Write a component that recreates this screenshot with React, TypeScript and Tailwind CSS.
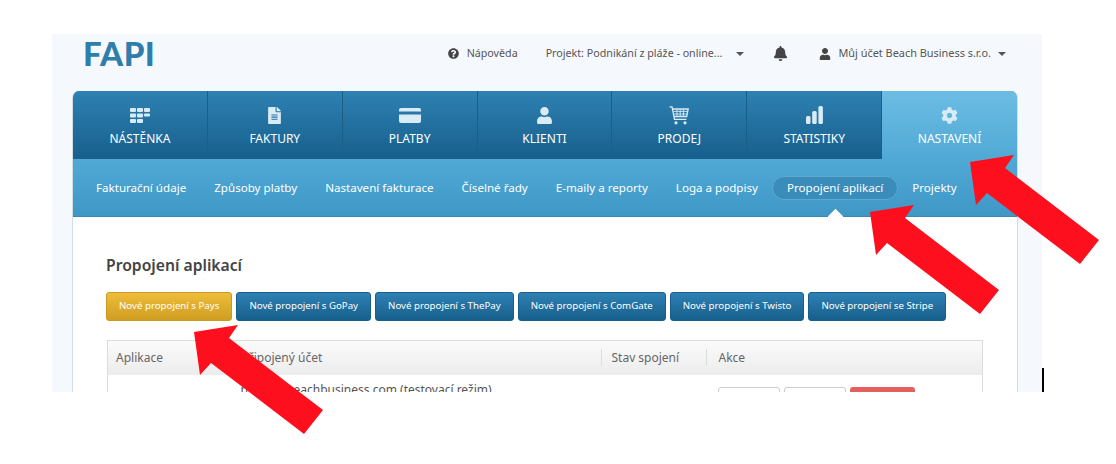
import { FaBell, FaCog, FaFileAlt, FaQuestionCircle, FaUser } from "react-icons/fa";
import type { ReactNode } from "react";

const DashIcon = () => (
  <svg width="20" height="15" viewBox="0 0 20 15" fill="currentColor">
    <rect x="0" y="0" width="6" height="4" rx="1" />
    <rect x="7" y="0" width="6" height="4" rx="1" />
    <rect x="14" y="0" width="6" height="4" rx="1" />
    <rect x="0" y="5.500" width="6" height="4" rx="1" />
    <rect x="7" y="5.500" width="6" height="4" rx="1" />
    <rect x="14" y="5.500" width="6" height="3" rx="1" />
    <rect x="0" y="11" width="6" height="4" rx="1" />
    <rect x="7" y="11" width="6" height="4" rx="1" />
  </svg>
);

const CardIcon = () => (
  <svg width="22" height="15" viewBox="0 0 22 15" fill="currentColor">
    <path d="M2 0h18a2 2 0 0 1 2 2v1.500H0V2a2 2 0 0 1 2-2z" />
    <path d="M0 6.500h22V13a2 2 0 0 1-2 2H2a2 2 0 0 1-2-2z" />
  </svg>
);

const CartIcon = () => (
  <svg width="20" height="19" viewBox="0 0 20 19" fill="none" stroke="currentColor">
    <path d="M0.500 0.800h2.500l2.500 12.500h12" strokeWidth="1.300" />
    <path d="M3.600 3h15.600l-1.500 7.500H5" strokeWidth="1.300" />
    <path d="M4.500 5.400h14M4.900 8h13M8 3v7.500M11.200 3v7.500M14.400 3v7.500" strokeWidth="0.900" />
    <circle cx="7" cy="16.800" r="1.600" fill="currentColor" stroke="none" />
    <circle cx="16" cy="16.800" r="1.600" fill="currentColor" stroke="none" />
  </svg>
);

const StatsIcon = () => (
  <svg width="17" height="18" viewBox="0 0 17 18" fill="currentColor">
    <rect x="0" y="10" width="4.500" height="8" rx="1.500" />
    <rect x="6.200" y="5" width="4.500" height="13" rx="1.500" />
    <rect x="12.400" y="0" width="4.500" height="18" rx="1.500" />
  </svg>
);

const Caret = ({ className }: { className: string }) => (
  <svg width="8" height="4" viewBox="0 0 8 4" fill="#555" className={className}>
    <path d="M0 0h8L4 4z" />
  </svg>
);

const tabs: [string, ReactNode][] = [
  ["NÁSTĚNKA", <DashIcon />],
  ["FAKTURY", <FaFileAlt size={17} />],
  ["PLATBY", <CardIcon />],
  ["KLIENTI", <FaUser size={17} />],
  ["PRODEJ", <CartIcon />],
  ["STATISTIKY", <StatsIcon />],
];

const subnav = [
  "Fakturační údaje",
  "Způsoby platby",
  "Nastavení fakturace",
  "Číselné řady",
  "E-maily a reporty",
  "Loga a podpisy",
];

const connectButtons = [
  "Nové propojení s GoPay",
  "Nové propojení s ThePay",
  "Nové propojení s ComGate",
  "Nové propojení s Twisto",
  "Nové propojení se Stripe",
];

function Arrow({ x, y }: { x: number; y: number }) {
  return (
    <polygon
      transform={`translate(${x} ${y})`}
      points="0,0 -44,7 -38,50 -27,38 66,109 85,85 -9,13"
      fill="#fd0f1e"
    />
  );
}

export default function App() {
  return (
    <div className="relative h-[464px] w-[1116px] overflow-hidden bg-white pl-[52px] pt-[34px] font-['Noto_Sans',sans-serif]">
      <div className="h-[358px] w-[990px] overflow-hidden bg-[#f5f9fd] pl-[20px] pr-[24px]">
        <header className="flex h-[57px] items-start text-[10.700px] text-[#555]">
          <div className="ml-[11px] font-['Lato',sans-serif] text-[33px] font-black leading-[39px] tracking-[0.4px] text-[#2f7dab]">
            FAPI
          </div>
          <div className="ml-auto mr-[12px] flex h-[39px] items-center">
            <FaQuestionCircle size={11} className="mr-[8px] text-[#444]" />
            <span>Nápověda</span>
            <span className="ml-[28px]">Projekt: Podnikání z pláže - online...</span>
            <Caret className="ml-[14px]" />
            <FaBell size={15} className="ml-[29px] text-[#444]" />
            <FaUser size={12} className="ml-[31px] mr-[7px] text-[#444]" />
            <span className="text-[10.900px]">Můj účet Beach Business s.r.o.</span>
            <Caret className="ml-[7px]" />
          </div>
        </header>

        <div className="overflow-hidden rounded-t-[7px] border-x border-[#d4dde4] bg-white">
          <nav className="grid h-[68px] grid-cols-7 bg-[#4fa8d4]">
            {tabs.map(([label, icon]) => (
              <div
                key={label}
                className="flex flex-col items-center border-r border-[#1a5f88] bg-gradient-to-b from-[#2e81b3] to-[#175f8c] pt-[14px] text-white"
              >
                <div className="flex h-[20px] items-center text-[#d9ecf6]">{icon}</div>
                <div className="mt-[6px] text-[12px] leading-[16px]">{label}</div>
              </div>
            ))}
            <div className="flex flex-col items-center bg-gradient-to-b from-[#6cbde4] to-[#50a9d5] pt-[14px] text-white">
              <div className="flex h-[20px] items-center text-[#d9ecf6]">
                <FaCog size={17} />
              </div>
              <div className="mt-[6px] text-[12px] leading-[16px]">NASTAVENÍ</div>
            </div>
          </nav>

          <div className="relative flex h-[58px] items-center border-b border-[#3a8ab5] bg-gradient-to-b from-[#50a9d5] to-[#3f97c6] pl-[23px] pt-[1px] text-[11.600px] text-white">
            <div className="flex items-center gap-[28px]">
              {subnav.map((item) => (
                <span key={item}>{item}</span>
              ))}
            </div>
            <span className="ml-[14px] rounded-full border border-[#5fa9d0] bg-[#3a8cbb] px-[14px] py-[2px]">
              Propojení aplikací
            </span>
            <span className="ml-[14px]">Projekty</span>
            <div className="absolute bottom-[-6px] left-[757px] size-[11px] rotate-45 bg-white" />
          </div>

          <div className="h-[175px] px-[33px] pt-[38px]">
            <h2 className="text-[15.700px] font-semibold leading-[20px] text-[#444]">Propojení aplikací</h2>
            <div className="mt-[17px] flex gap-[4px]">
              <button className="h-[29px] whitespace-nowrap rounded-[3px] border border-[#c99a20] bg-gradient-to-b from-[#efbd3a] to-[#cf9d20] px-[12px] text-[9.700px] text-white">
                Nové propojení s Pays
              </button>
              {connectButtons.map((label) => (
                <button
                  key={label}
                  className="h-[29px] whitespace-nowrap rounded-[3px] border border-[#175f8c] bg-gradient-to-b from-[#2e81b3] to-[#175f8c] px-[12px] text-[9.700px] text-white"
                >
                  {label}
                </button>
              ))}
            </div>

            <table className="ml-[1px] mt-[19px] w-[876px] table-fixed border-collapse border border-[#dcdcdc] text-[12px] text-[#666]">
              <thead>
                <tr className="h-[34px] bg-gradient-to-b from-[#fbfbfb] to-[#ececec] text-left font-normal">
                  <th className="w-[124px] pl-[8px] font-normal">Aplikace</th>
                  <th className="w-[369px] pl-[10px] font-normal">Připojený účet</th>
                  <th className="w-[105px] pl-[10px] font-normal">
                    <span className="-ml-[10px] border-l border-[#dcdcdc] pl-[10px]">Stav spojení</span>
                  </th>
                  <th className="pl-[12px] font-normal">
                    <span className="-ml-[12px] border-l border-[#dcdcdc] pl-[12px]">Akce</span>
                  </th>
                </tr>
              </thead>
              <tbody>
                <tr>
                  <td />
                  <td className="pl-[9px] pt-[6px] align-top text-[#555]">platby@beachbusiness.com (testovací režim)</td>
                  <td />
                  <td className="pl-[12px] pt-[12px] align-top">
                    <div className="flex gap-[4px]">
                      <span className="h-[24px] w-[62px] rounded-[3px] border border-[#ccc] bg-white" />
                      <span className="h-[24px] w-[62px] rounded-[3px] border border-[#ccc] bg-white" />
                      <span className="h-[24px] w-[65px] rounded-[3px] bg-[#e4605f]" />
                    </div>
                  </td>
                </tr>
              </tbody>
            </table>
          </div>
        </div>
      </div>

      <div className="absolute left-[1042px] top-[368px] h-[24px] w-[2px] bg-black" />

      <svg className="pointer-events-none absolute left-0 top-0" width="1116" height="464">
        <Arrow x={1014} y={155} />
        <Arrow x={914} y={205} />
        <Arrow x={238} y={325} />
      </svg>
    </div>
  );
}
